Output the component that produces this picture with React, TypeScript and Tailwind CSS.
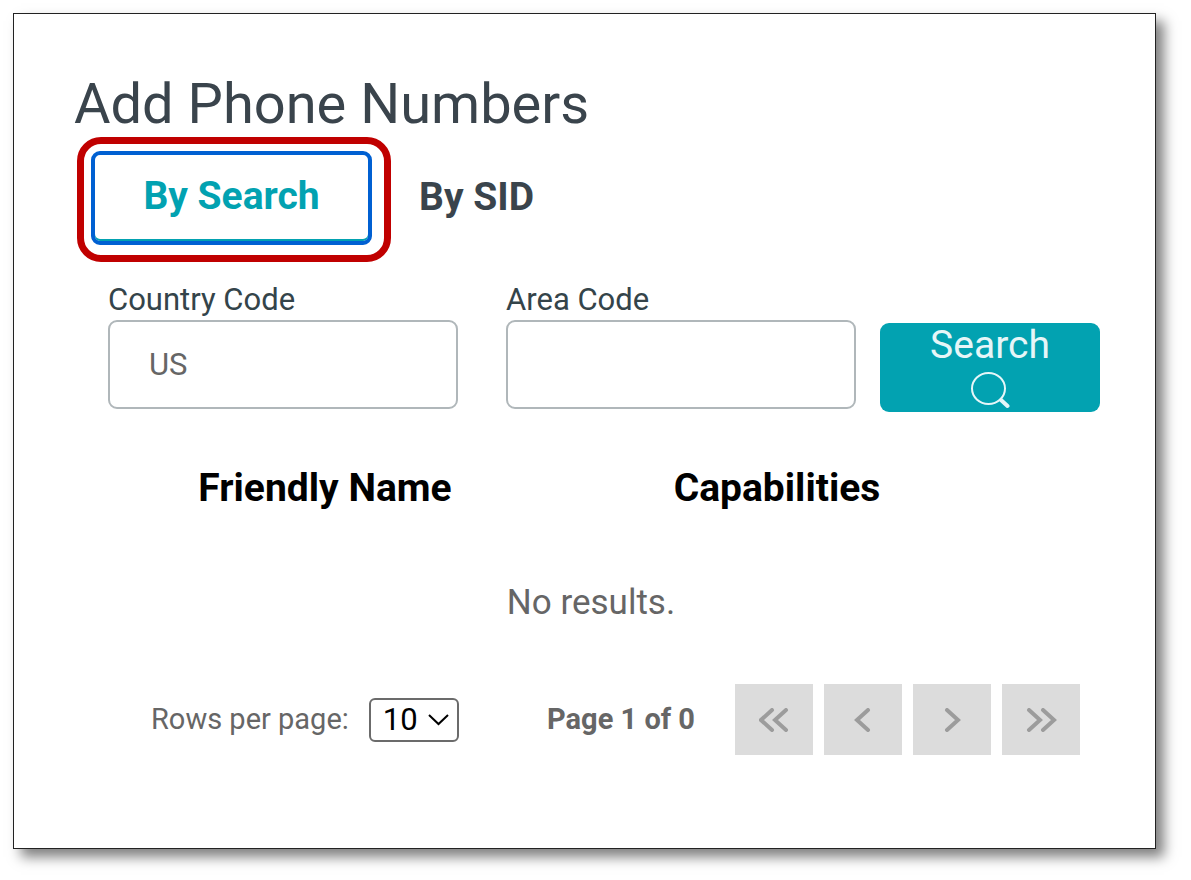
import React, { useState } from "react";

const SearchIcon = () => (
  <svg width="40" height="38" viewBox="0 0 40 38" fill="none" stroke="#e6f6f8" aria-hidden="true">
    <ellipse cx="18.5" cy="17.5" rx="16.5" ry="15.5" strokeWidth="2" />
    <path d="M31 29l6.5 6" strokeWidth="4" strokeLinecap="round" />
  </svg>
);

const ICONS = {
  first: "M13 2L2 12L13 22M27 2L16 12L27 22",
  previous: "M20 2L9 12L20 22",
  next: "M10 2L21 12L10 22",
  last: "M3 2L14 12L3 22M17 2L28 12L17 22",
};

const PageButton = ({ label, icon }: { label: string; icon: keyof typeof ICONS }) => (
  <button
    type="button"
    disabled
    aria-label={label}
    className="flex h-[71px] w-[78px] items-center justify-center bg-[#dcdcdc]"
  >
    <svg width="31" height="24" viewBox="0 0 31 24" fill="none" stroke="#9c9c9c" strokeWidth="4" strokeLinecap="round">
      <path d={ICONS[icon]} />
    </svg>
  </button>
);

export default function App() {
  const [tab, setTab] = useState("search");
  const [countryCode, setCountryCode] = useState("");
  const [areaCode, setAreaCode] = useState("");
  const [rows, setRows] = useState("10");

  return (
    <div className="bg-white pt-[13px] pr-[35px] pb-[30px] pl-[13px] font-[Roboto,sans-serif]">
      <main className="border border-[#222] bg-white pt-[58px] pr-[55px] pb-[93px] pl-[60px] shadow-[8px_8px_12px_rgba(0,0,0,0.5)]">
        <h1 className="text-[56px] leading-[65px] text-[#3a444c]">Add Phone Numbers</h1>

        <div role="tablist" className="flex items-center">
          <div className="ml-[3px] rounded-[24px] border-[7px] border-[#c00000] pt-[7px] pr-[12px] pb-[10px] pl-[7px]">
            <button
              type="button"
              role="tab"
              aria-selected={tab === "search"}
              onClick={() => setTab("search")}
              className="h-[94px] w-[281px] rounded-[9px] border-[4px] border-[#0060d2] pb-1 text-[39px] font-bold text-[#02a2b1] shadow-[inset_0_-2px_0_#02a2b1]"
            >
              By Search
            </button>
          </div>
          <button
            type="button"
            role="tab"
            aria-selected={tab === "sid"}
            onClick={() => setTab("sid")}
            className="ml-7 pb-1 text-[39px] font-bold text-[#3a444c]"
          >
            By SID
          </button>
        </div>

        <form className="mt-5 ml-[34px] flex items-end" onSubmit={(e) => e.preventDefault()}>
          <div className="mb-[3px] min-w-0 flex-1">
            <label htmlFor="country" className="block text-[31px] leading-[36px] text-[#34444a]">
              Country Code
            </label>
            <input
              id="country"
              type="text"
              placeholder="US"
              value={countryCode}
              onChange={(e) => setCountryCode(e.target.value)}
              className="mt-[2px] block h-[89px] w-full rounded-[9px] border-2 border-[#b0b7ba] px-[39px] text-[31px] text-[#666] placeholder:text-[#666]"
            />
          </div>
          <div className="mb-[3px] ml-12 min-w-0 flex-1">
            <label htmlFor="area" className="block text-[31px] leading-[36px] text-[#34444a]">
              Area Code
            </label>
            <input
              id="area"
              type="text"
              value={areaCode}
              onChange={(e) => setAreaCode(e.target.value)}
              className="mt-[2px] block h-[89px] w-full rounded-[9px] border-2 border-[#b0b7ba] px-[39px] text-[31px] text-[#666]"
            />
          </div>
          <button
            type="submit"
            className="ml-6 flex h-[89px] w-[220px] flex-col items-center rounded-[9px] bg-[#02a2b1] text-[39px] leading-[44px] text-[#e6f6f8]"
          >
            Search
            <span className="mt-1">
              <SearchIcon />
            </span>
          </button>
        </form>

        <div className="mt-12 pr-[17px] pl-[25px]">
          <table className="w-full table-fixed">
            <thead>
              <tr className="h-14 text-[39px] leading-[48px] text-black">
                <th className="font-bold">Friendly Name</th>
                <th className="font-bold">Capabilities</th>
                <td className="w-20" />
              </tr>
            </thead>
            <tbody>
              <tr className="h-[168px] text-[35px] text-[#666]">
                <td colSpan={3} className="pt-1.5 text-center">
                  No results.
                </td>
              </tr>
            </tbody>
          </table>
        </div>

        <div className="mr-5 ml-[77px] flex items-center">
          <label htmlFor="rows" className="text-[29px] text-[#666]">
            Rows per page:
          </label>
          <div className="relative ml-5">
            <select
              id="rows"
              value={rows}
              onChange={(e) => setRows(e.target.value)}
              className="block h-11 w-[90px] appearance-none rounded-md border-2 border-[#6b6b6b] bg-white pl-3 text-[31px] leading-none text-black"
            >
              <option>10</option>
              <option>25</option>
              <option>50</option>
            </select>
            <svg
              className="pointer-events-none absolute top-4 right-[10px]"
              width="21"
              height="12"
              viewBox="0 0 21 12"
              fill="none"
              stroke="#000"
              strokeWidth="2"
            >
              <path d="M1 1L10.5 10L20 1" />
            </svg>
          </div>
          <span className="ml-auto text-[29px] font-bold text-[#666]">Page 1 of 0</span>
          <div className="ml-10 flex gap-[11px]">
            <PageButton label="First page" icon="first" />
            <PageButton label="Previous page" icon="previous" />
            <PageButton label="Next page" icon="next" />
            <PageButton label="Last page" icon="last" />
          </div>
        </div>
      </main>
    </div>
  );
}
